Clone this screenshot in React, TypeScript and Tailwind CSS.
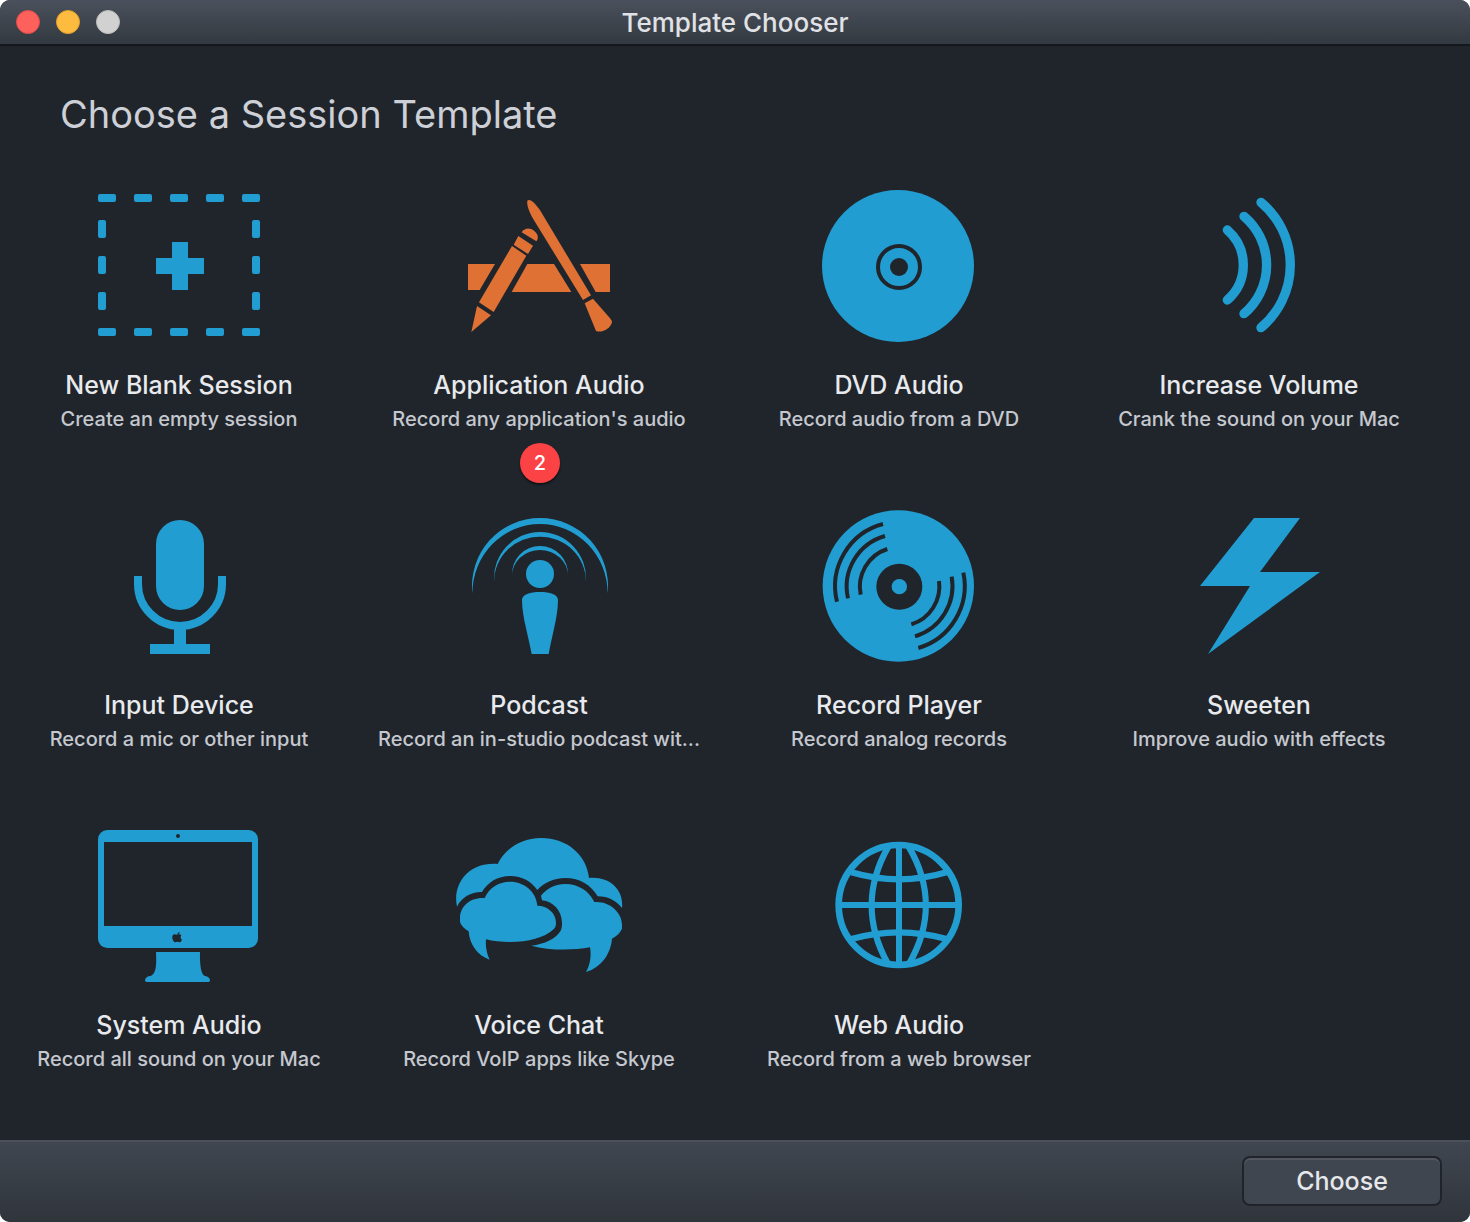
import type { ReactNode } from "react";

const BG = "#20252c";

function Icon({ x = 0, color = "text-[#219dd1]", children }: { x?: number; color?: string; children: ReactNode }) {
  return (
    <svg aria-hidden="true" viewBox={`${x} 0 540 510`} className={`h-[170px] w-[180px] ${color}`} fill="currentColor">
      {children}
    </svg>
  );
}

const dashXs = [54, 162, 270, 378, 486];
const dashYs = [120, 228, 336];

const BlankIcon = () => (
  <Icon x={30}>
    {dashXs.map((x) => (
      <g key={x}>
        <rect x={x} y="42" width="54" height="24" rx="6" />
        <rect x={x} y="444" width="54" height="24" rx="6" />
      </g>
    ))}
    {dashYs.map((y) => (
      <g key={y}>
        <rect x="54" y={y} width="24" height="54" rx="6" />
        <rect x="516" y={y} width="24" height="54" rx="6" />
      </g>
    ))}
    <path d="M276 186H324V234H372V282H324V330H276V282H228V234H276Z" />
  </Icon>
);

const ApplicationIcon = () => (
  <Icon color="text-[#df7134]">
    <path d="M54 252H135L89 330H54Z" />
    <path d="M232 252H312L364 336H185Z" />
    <path d="M390 252H480V336H437Z" />
    <path d="M186 198L229 227L131 396L87 367Z" />
    <path d="M205 168L249 197L234 222L191 194Z" />
    <path d="M215 157C224 143 240 143 252 152C264 161 267 174 259 184Z" />
    <path d="M81 378L123 406L64 456Z" />
    <path d="M232 62C240 55 256 70 272 94L423 346L399 360L252 121C238 98 230 78 232 62Z" />
    <path d="M429 356L404 370L438 453C456 460 482 446 486 426C486 423 484 420 480 415Z" />
  </Icon>
);

const DvdIcon = () => (
  <Icon>
    <circle cx="264" cy="258" r="228" />
    <circle cx="267" cy="261" r="63" fill="none" stroke={BG} strokeWidth="12" />
    <circle cx="267" cy="261" r="27" fill={BG} />
  </Icon>
);

const VolumeIcon = () => (
  <Icon>
    <g fill="none" stroke="currentColor" strokeWidth="28" strokeLinecap="round">
      <path d="M172 150A139 139 0 0 1 172 360" />
      <path d="M222 109A191 191 0 0 1 222 401" />
      <path d="M273 67A245 245 0 0 1 273 443" />
    </g>
  </Icon>
);

const MicIcon = () => (
  <Icon>
    <rect x="198" y="60" width="144" height="270" rx="72" />
    <path d="M144 228V252A126 126 0 0 0 396 252V228" fill="none" stroke="currentColor" strokeWidth="24" />
    <path d="M252 366H288V432H360V462H180V432H252Z" />
  </Icon>
);

const PodcastIcon = () => (
  <Icon>
    <path d="M67.2 280A204 204 0 0 1 270 54A204 204 0 0 1 472.8 280A202.8 208 0 0 0 270 72A202.8 208 0 0 0 67.2 280Z" />
    <path d="M132.4 244A138 138 0 0 1 270 96A138 138 0 0 1 407.6 244A137.6 134 0 0 0 270 110A137.6 134 0 0 0 132.4 244Z" />
    <path d="M186.1 227A84 84 0 0 1 270 138A84 84 0 0 1 353.9 227A83.9 77 0 0 0 270 150A83.9 77 0 0 0 186.1 227Z" />
    <circle cx="270" cy="222" r="42" />
    <path d="M216 300C216 284 240 276 270 276S324 284 324 300C324 350 306 405 296 462H245C235 405 216 350 216 300Z" />
  </Icon>
);

const RecordIcon = () => (
  <Icon>
    <circle cx="265" cy="258" r="227" />
    <g fill="none" stroke={BG} strokeWidth="12">
      <path d="M219 72A193 193 0 0 0 81 305" />
      <path d="M225 108A158 158 0 0 0 114 295" />
      <path d="M232 147A119 119 0 0 0 152 284" />
      <path d="M460 218A194 194 0 0 1 325 444" />
      <path d="M425 230A158 158 0 0 1 315 409" />
      <path d="M387 243A119 119 0 0 1 304 373" />
    </g>
    <circle cx="268" cy="260" r="69" fill={BG} />
    <circle cx="268" cy="260" r="23" />
  </Icon>
);

const BoltIcon = () => (
  <Icon>
    <path d="M252 54H390L270 216H450L114 462L240 258H90Z" />
  </Icon>
);

const ComputerIcon = () => (
  <Icon x={30}>
    <rect x="54" y="30" width="480" height="354" rx="28" />
    <g fill={BG}>
      <rect x="72" y="66" width="444" height="252" />
      <circle cx="294" cy="48" r="6" />
      <path d="M291 344C292 340 295 337 299 336C299 341 296 344 291 344Z" />
      <path d="M304 345C299 341 294 344 291 344C287 344 283 340 279 345C274 351 278 361 283 366C287 368 289 365 292 365C295 365 299 369 302 365C304 363 305 361 306 359C301 356 301 349 304 345Z" />
    </g>
    <path d="M228 396H360C359 440 364 466 376 468C386 470 390 475 390 481C390 484 388 486 385 486H200C197 486 195 484 195 481C196 473 202 468 212 468C228 460 230 440 228 396Z" />
  </Icon>
);

const ChatIcon = () => (
  <Icon x={30}>
    <path d="M51 260C36 190 88 125 173 132C193 90 240 54 303 54C382 54 440 105 447 174C507 168 552 208 546 264C530 243 505 229 473 229C453 195 420 174 376 174C340 174 310 189 292 210C274 184 247 168 210 168C173 168 143 187 126 216C95 215 65 231 51 260Z" />
    <path d="M134 234C147 204 175 185 210 185C255 185 289 217 292 257C322 257 348 279 348 308C348 318 346 322 341 328C312 354 265 366 210 366C183 366 158 364 138 358C136 380 140 400 149 419C114 408 88 373 86 334C72 326 64 317 60 306V294C60 258 92 231 134 234Z" />
    <path d="M303 227C321 205 346 192 376 192C416 192 448 214 463 246C508 242 546 277 546 314V326C541 337 531 348 516 356C512 402 484 442 438 456C450 435 455 409 450 382C395 392 325 391 274 377C314 371 346 358 362 332C366 324 366 316 366 308C365 271 340 245 306 241Z" />
  </Icon>
);

const GlobeIcon = () => (
  <Icon x={-30}>
    <g fill="none" stroke="currentColor" strokeWidth="19">
      <circle cx="236" cy="255" r="180" strokeWidth="20" />
      <path d="M237 75V435M56 255H416" strokeWidth="18" />
      <path d="M205 80C139 195 139 315 203 430" />
      <path d="M266 80C334 195 334 315 268 430" />
      <path d="M94 157Q237 199 380 157" />
      <path d="M94 357Q237 317 380 357" />
    </g>
  </Icon>
);

type Template = { title: string; detail: string; icon: ReactNode; badge?: number };

const templates: Template[] = [
  { title: "New Blank Session", detail: "Create an empty session", icon: <BlankIcon /> },
  { title: "Application Audio", detail: "Record any application's audio", icon: <ApplicationIcon />, badge: 2 },
  { title: "DVD Audio", detail: "Record audio from a DVD", icon: <DvdIcon /> },
  { title: "Increase Volume", detail: "Crank the sound on your Mac", icon: <VolumeIcon /> },
  { title: "Input Device", detail: "Record a mic or other input", icon: <MicIcon /> },
  { title: "Podcast", detail: "Record an in-studio podcast wit...", icon: <PodcastIcon /> },
  { title: "Record Player", detail: "Record analog records", icon: <RecordIcon /> },
  { title: "Sweeten", detail: "Improve audio with effects", icon: <BoltIcon /> },
  { title: "System Audio", detail: "Record all sound on your Mac", icon: <ComputerIcon /> },
  { title: "Voice Chat", detail: "Record VoIP apps like Skype", icon: <ChatIcon /> },
  { title: "Web Audio", detail: "Record from a web browser", icon: <GlobeIcon /> },
];

function TemplateCard({ title, detail, icon, badge }: Template) {
  return (
    <li className="relative h-80">
      <button type="button" className="flex w-full flex-col items-center">
        {icon}
        <span className="mt-4 pr-0.5 text-[25px] leading-[38px] font-medium whitespace-nowrap text-[#e8eaed]">{title}</span>
        <span className="pr-0.5 text-[20px] leading-[30px] font-medium whitespace-nowrap text-[#c5c8ce]">{detail}</span>
      </button>
      {badge !== undefined && (
        <span className="absolute top-[263px] left-1/2 flex size-10 -translate-x-1/2 items-center justify-center rounded-full bg-[#fb4244] text-[20px] font-medium text-white shadow-[0_2px_2px_rgba(0,0,0,0.5)]">
          {badge}
        </span>
      )}
    </li>
  );
}

export default function App() {
  return (
    <div className="bg-white font-['Inter',sans-serif]">
      <div className="flex min-h-screen flex-col overflow-hidden rounded-[10px] bg-[#20252c]">
        <header className="grid h-[46px] grid-cols-[1fr_auto_1fr] items-center border-b-2 border-[#14171b] bg-linear-to-b from-[#4b515c] to-[#333940] px-4">
          <div className="flex gap-4">
            <button type="button" aria-label="Close" className="size-6 rounded-full border border-[#e24b48] bg-[#fe605c]" />
            <button type="button" aria-label="Minimize" className="size-6 rounded-full border border-[#e0a028] bg-[#fdbc40]" />
            <button type="button" aria-label="Zoom" className="size-6 rounded-full border border-[#bcbcbc] bg-[#d1d1d1]" />
          </div>
          <span className="pt-0.5 text-[26px] leading-8 font-medium text-[#e0e2e6]">Template Chooser</span>
        </header>
        <main className="flex-1">
          <h1 className="px-[60px] pt-11 text-[38px] leading-[48px] text-[#cdd0d6]">Choose a Session Template</h1>
          <ul className="mt-[42px] grid grid-cols-4 pr-[30px]">
            {templates.map((t) => (
              <TemplateCard key={t.title} {...t} />
            ))}
          </ul>
        </main>
        <footer className="flex h-[82px] items-start justify-end border-t-2 border-[#4b505c] bg-linear-to-b from-[#404650] to-[#30353c] px-7 pt-3.5">
          <button
            type="button"
            className="h-[50px] w-[200px] rounded-lg border-2 border-[#20242a] bg-[#40464f] pt-0.5 text-[25px] font-medium text-[#e6e8eb] shadow-[inset_0_2px_0_#525761]"
          >
            Choose
          </button>
        </footer>
      </div>
    </div>
  );
}
